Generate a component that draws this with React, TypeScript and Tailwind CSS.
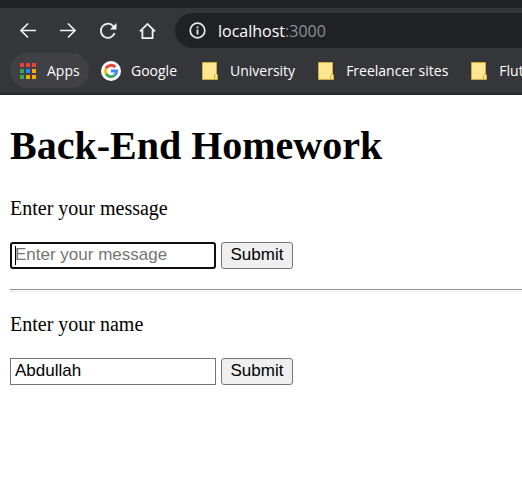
import { useState } from "react";

function BackIcon() {
  return (
    <svg width="18" height="18" viewBox="0 0 18 18" fill="none" stroke="#f1f3f4" strokeWidth="1.7" aria-hidden="true">
      <path d="M17 8.5H2.5M9 1.5l-7 7 7 7" />
    </svg>
  );
}

function ForwardIcon() {
  return (
    <svg width="18" height="18" viewBox="0 0 18 18" fill="none" stroke="#f1f3f4" strokeWidth="1.7" aria-hidden="true">
      <path d="M1 8.5h14.5M9 1.5l7 7-7 7" />
    </svg>
  );
}

function ReloadIcon() {
  return (
    <svg width="18" height="18" viewBox="0 0 18 18" aria-hidden="true">
      <path d="M15.6 11.2A7.1 7.1 0 1 1 14 3.8L15.5 5.4" fill="none" stroke="#e8eaed" strokeWidth="1.9" />
      <path d="M17.5 1v6.5H11z" fill="#f1f3f4" />
    </svg>
  );
}

function HomeIcon() {
  return (
    <svg width="18" height="18" viewBox="0 0 18 18" fill="none" stroke="#f1f3f4" strokeWidth="1.8" aria-hidden="true">
      <path d="M1 9.4 8.5 1.9 16 9.4M3.4 8v8.1h10.2V8" />
    </svg>
  );
}

function InfoIcon() {
  return (
    <svg width="17" height="17" viewBox="0 0 17 17" aria-hidden="true">
      <circle cx="8.5" cy="8.5" r="7.3" fill="none" stroke="#e8eaed" strokeWidth="1.7" />
      <path d="M7.6 7.6h1.8v5H7.6zM7.6 4.4h1.8v1.8H7.6z" fill="#e8eaed" />
    </svg>
  );
}

const appColors = [
  "#ea4335", "#ea4335", "#ea4335",
  "#34a853", "#2684fc", "#f9ab00",
  "#34a853", "#f9ab00", "#f9ab00",
];

function AppsIcon() {
  return (
    <svg width="18" height="18" viewBox="0 0 18 18" aria-hidden="true">
      {appColors.map((color, i) => (
        <rect key={i} x={1 + (i % 3) * 6} y={1 + Math.floor(i / 3) * 6} width="4" height="4" fill={color} />
      ))}
    </svg>
  );
}

function GoogleIcon() {
  return (
    <svg width="20" height="20" viewBox="0 0 20 20" aria-hidden="true">
      <circle cx="10" cy="10" r="10" fill="#fff" />
      <g fill="none" strokeWidth="2.8">
        <path d="M5 7.4A5.7 5.7 0 0 1 14.3 6.1" stroke="#ea4335" />
        <path d="M5 12.6a5.7 5.7 0 0 1 0-5.2" stroke="#fbbc05" />
        <path d="M13.7 14.3A5.7 5.7 0 0 1 5 12.6" stroke="#34a853" />
        <path d="M10 10h5.7a5.7 5.7 0 0 1-2 4.3" stroke="#4285f4" />
      </g>
    </svg>
  );
}

function FolderIcon() {
  return (
    <svg width="16" height="18" viewBox="0 0 16 18" aria-hidden="true">
      <path d="M.5.5h14v11.5l1 1v4.5H.5z" fill="#ffe693" stroke="#d1ab3b" />
      <path d="M12.5 17v-3.5l1.5-1.5" fill="none" stroke="#d1ab3b" />
    </svg>
  );
}

const folders = ["University", "Freelancer sites", "Flutter"];

function BrowserBar() {
  return (
    <header className="overflow-hidden border-b-2 border-[#29282b] bg-[#35363a] font-['Open_Sans',sans-serif] text-white">
      <div className="h-2 bg-[#202124]" />
      <div className="mt-[5px] flex h-[35px] items-center">
        <nav className="flex w-[175px] shrink-0 gap-[22px] pl-[19px]" aria-label="Browser">
          <button type="button" aria-label="Back"><BackIcon /></button>
          <button type="button" aria-label="Forward"><ForwardIcon /></button>
          <button type="button" aria-label="Reload"><ReloadIcon /></button>
          <button type="button" aria-label="Home"><HomeIcon /></button>
        </nav>
        <div className="flex h-full flex-1 items-center gap-3 rounded-l-full bg-[#202124] pl-[14px] text-[16px] leading-6">
          <InfoIcon />
          <p>localhost<span className="text-[#8d9196]">:3000</span></p>
        </div>
      </div>
      <div className="mt-[5px] mb-[5px] flex h-[35px] items-center whitespace-nowrap pl-[10px] text-[14px] leading-5">
        <a href="#apps" className="flex h-full w-[79px] shrink-0 items-center gap-[10px] rounded-full bg-[#414045] pl-[9px]">
          <AppsIcon />Apps
        </a>
        <a href="#google" className="ml-3 flex w-[101px] shrink-0 items-center gap-[10px]">
          <GoogleIcon />Google
        </a>
        <div className="flex gap-[23px]">
          {folders.map((name) => (
            <button key={name} type="button" className="flex shrink-0 items-center gap-3">
              <FolderIcon />{name}
            </button>
          ))}
        </div>
      </div>
    </header>
  );
}

const field =
  "block h-[27px] w-[206px] border bg-white pb-[2px] text-[17px] leading-5 text-black caret-transparent outline-none placeholder:text-[#757575]";

function SubmitButton() {
  return (
    <button type="submit" className="h-[27px] w-[72px] rounded-[3px] border border-[#767676] bg-[#efefef] pb-[2px] text-[17px] leading-5">
      Submit
    </button>
  );
}

export default function App() {
  const [message, setMessage] = useState("");
  const [name, setName] = useState("Abdullah");
  return (
    <div className="min-h-screen overflow-x-hidden bg-white text-black">
      <BrowserBar />
      <main className="pl-[10px] pt-7 font-['Liberation_Serif',serif] text-[20px] leading-6">
        <h1 className="text-[40px] font-bold leading-[46px]">Back-End Homework</h1>
        <form className="mt-[27px]" onSubmit={(e) => e.preventDefault()}>
          <label htmlFor="message" className="block">Enter your message</label>
          <div className="mt-[22px] flex gap-[5px] font-['Liberation_Sans',sans-serif]">
            <div className="relative">
              <input
                id="message"
                className={field + " rounded-[3px] border-2 border-[#101010] px-[3px]"}
                placeholder="Enter your message"
                value={message}
                onChange={(e) => setMessage(e.target.value)}
              />
              <span className="absolute left-[5px] top-1 h-[19px] w-px bg-black" />
            </div>
            <SubmitButton />
          </div>
        </form>
        <hr className="my-5 h-[3px] border-0 border-t border-b border-t-[#8f8f8f] border-b-[#eeeeee]" />
        <form onSubmit={(e) => e.preventDefault()}>
          <label htmlFor="name" className="block">Enter your name</label>
          <div className="mt-[22px] flex gap-[5px] font-['Liberation_Sans',sans-serif]">
            <input
              id="name"
              className={field + " border-[#767676] px-1"}
              value={name}
              onChange={(e) => setName(e.target.value)}
            />
            <SubmitButton />
          </div>
        </form>
      </main>
    </div>
  );
}
